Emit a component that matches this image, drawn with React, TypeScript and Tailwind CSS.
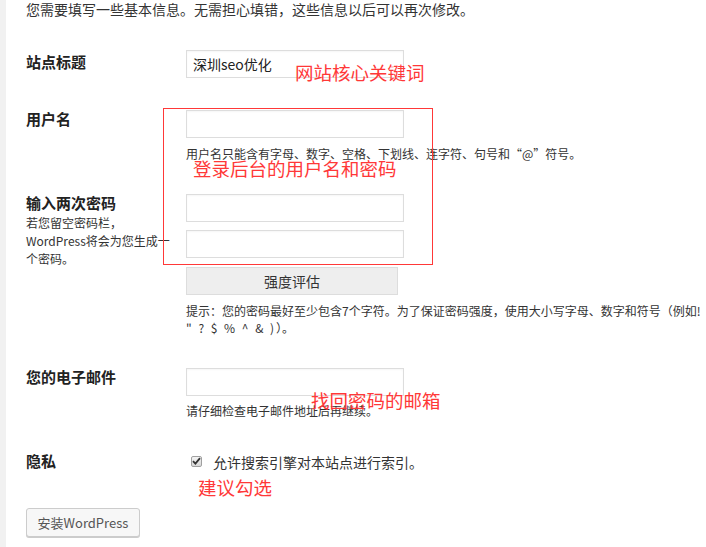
import React from 'react';

const FONT = "font-['Noto_Sans_CJK_SC',sans-serif]";

// 表单输入框
const Field: React.FC<{ value?: string }> = ({ value = '' }) => (
  <input
    type="text"
    defaultValue={value}
    className="block w-[218px] h-[28px] border border-[#ddd] bg-white px-[6px] text-[14px] text-[#222] outline-none shadow-[inset_0_1px_2px_rgba(0,0,0,0.04)]"
  />
);

// 红色标注
const Note: React.FC<{ text: string; className: string }> = ({ text, className }) => (
  <span className={`absolute whitespace-nowrap text-[18.5px] leading-[20px] text-[#ff3838] ${className}`}>{text}</span>
);

const App: React.FC = () => {
  return (
    <div className={`relative flex w-[706px] h-[547px] overflow-hidden bg-white text-[#333] ${FONT}`}>
      <div className="w-[6px] shrink-0 bg-[#f1f1f1]" />

      <div className="flex-1 pl-[20px]">
        <p className="mt-[-1px] whitespace-nowrap text-[14px] leading-[20px]">
          您需要填写一些基本信息。无需担心填错，这些信息以后可以再次修改。
        </p>

        {/* 站点标题 */}
        <div className="mt-[31px] flex items-start">
          <div className="w-[160px] mt-[2px] text-[15px] font-bold leading-[20px] text-[#222]">站点标题</div>
          <Field value="深圳seo优化" />
        </div>

        {/* 用户名 */}
        <div className="mt-[32px] flex items-start">
          <div className="w-[160px] mt-[-1px] text-[15px] font-bold leading-[20px] text-[#222]">用户名</div>
          <div>
            <Field />
            <p className="mt-[7px] whitespace-nowrap text-[12px] leading-[18px]">
              用户名只能含有字母、数字、空格、下划线、连字符、句号和“@”符号。
            </p>
          </div>
        </div>

        {/* 密码 */}
        <div className="mt-[31px] flex items-start">
          <div className="w-[160px] mt-[-1px]">
            <div className="text-[15px] font-bold leading-[20px] text-[#222]">输入两次密码</div>
            <p className="mt-[1px] whitespace-nowrap text-[12px] leading-[18px]">
              若您留空密码栏，<br />
              WordPress将会为您生成一<br />
              个密码。
            </p>
          </div>
          <div>
            <Field />
            <div className="mt-[8px]">
              <Field />
            </div>
            <div className="mt-[9px] flex w-[212px] h-[28px] items-center justify-center border border-[#ddd] bg-[#eee] text-[14px] text-[#333]">
              强度评估
            </div>
            <p className="mt-[7px] whitespace-nowrap text-[12px] leading-[17px]">
              提示：您的密码最好至少包含7个字符。为了保证密码强度，使用大小写字母、数字和符号（例如!
              <br />
              <span className="tracking-[2px]">" ? $ % ^ &amp; )</span>）。
            </p>
          </div>
        </div>

        {/* 电子邮件 */}
        <div className="mt-[32px] flex items-start">
          <div className="w-[160px] mt-[-1px] text-[15px] font-bold leading-[20px] text-[#222]">您的电子邮件</div>
          <div>
            <Field />
            <p className="mt-[6px] whitespace-nowrap text-[12px] leading-[18px]">请仔细检查电子邮件地址后再继续。</p>
          </div>
        </div>

        {/* 隐私 */}
        <div className="mt-[31px] flex items-start">
          <div className="w-[160px] text-[15px] font-bold leading-[20px] text-[#222]">隐私</div>
          <label className="flex h-[20px] items-center">
            <span className="ml-[5px] flex h-[11px] w-[11px] items-center justify-center rounded-[2px] border border-[#a0a0a0] bg-gradient-to-b from-[#f4f4f4] to-[#d8d8d8]">
              <svg width="9" height="8" viewBox="0 0 9 8">
                <path d="M1 4.2 L3.4 6.6 L8 1.2" fill="none" stroke="#333" strokeWidth="1.8" />
              </svg>
            </span>
            <span className="ml-[11px] mt-[3px] whitespace-nowrap text-[14px] text-[#333]">允许搜索引擎对本站点进行索引。</span>
          </label>
        </div>

        <button className="mt-[37px] flex h-[29px] w-[114px] items-center justify-center rounded-[3px] border border-[#ccc] bg-[#f7f7f7] text-[13px] text-[#555] shadow-[0_1px_0_#ccc]">
          安装WordPress
        </button>
      </div>

      {/* 标注层 */}
      <div className="absolute left-[163px] top-[108px] h-[157px] w-[270px] border border-[#ff3838]" />
      <Note text="网站核心关键词" className="left-[295px] top-[62px]" />
      <Note text="登录后台的用户名和密码" className="left-[193px] top-[158px]" />
      <Note text="找回密码的邮箱" className="left-[311px] top-[390px]" />
      <Note text="建议勾选" className="left-[198px] top-[477px]" />
    </div>
  );
};

export default App;
